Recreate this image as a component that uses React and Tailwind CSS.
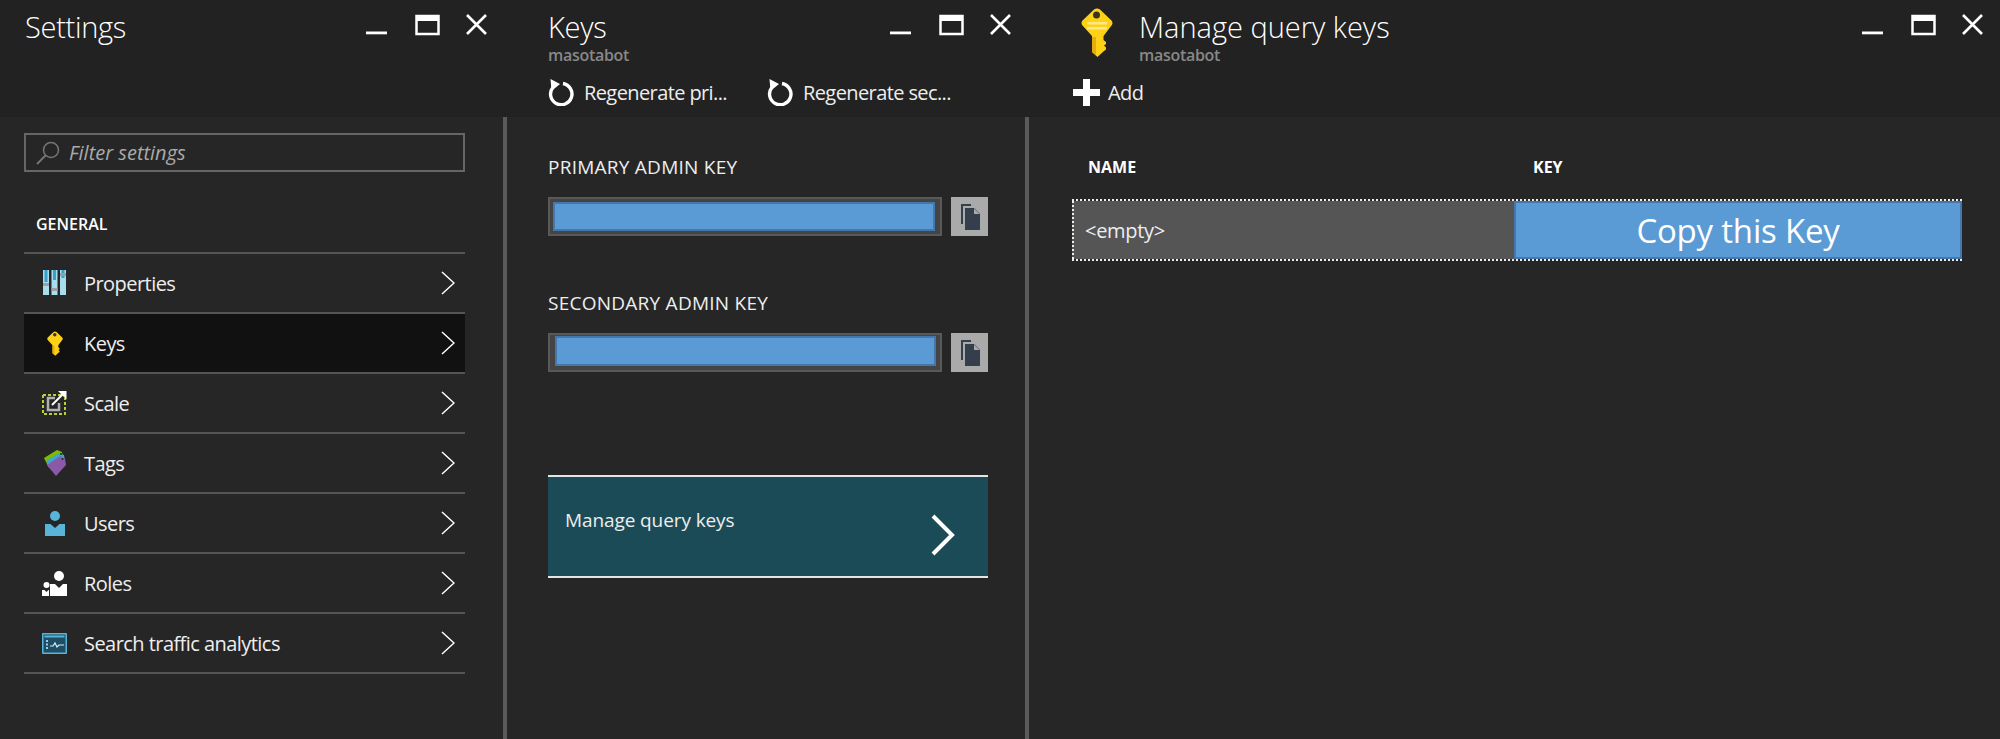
import React from 'react';

const uiFont = "font-['Open_Sans',sans-serif]";

const WindowControls = ({ className = '' }) => (
  <svg width="122" height="22" viewBox="0 0 122 22" className={`shrink-0 ${className}`}>
    <rect x="0" y="17.500" width="21" height="2.800" fill="#fff" />
    <path d="M50.500 2h22v18h-22z" fill="none" stroke="#fff" strokeWidth="2.500" />
    <rect x="50" y="1" width="23" height="6" fill="#fff" />
    <path d="M101 1l19 19M120 1l-19 19" stroke="#fff" strokeWidth="2.600" />
  </svg>
);

const KeyIcon = ({ width, height, stripes }) => (
  <svg width={width} height={height} viewBox="0 0 32 49" className="shrink-0">
    <path
      d="M13 1.500Q16-.5 19 1.500L30.500 12.500Q32.500 15 30.500 17.500L22.500 28V32L25 34V36L23 37.500L25 39.500V41.500L23 43L16.500 49L11 44V28L1.500 17.500Q-.5 15 1.500 12.500Z"
      fill="#fcd116"
    />
    <path d="M11 29H15V47.500L11 44Z" fill="#e8ac10" />
    {stripes && <path d="M6 14H26V16.500H6zM6 19H26V21.500H6z" fill="#ffe88a" />}
    <circle cx="15.500" cy="7" r="3.500" fill="#3a3320" />
  </svg>
);

const PropertiesIcon = () => (
  <svg width="23" height="26" viewBox="0 0 23 26">
    <path d="M0 0h6v25H0zM8.500 0h6v25h-6zM17 0h6v25h-6z" fill="#a9dcec" />
    <path d="M1.500 0h3v12h-3zM10 0h3v10h-3zM18.500 0h3v8h-3z" fill="#35a0cc" />
    <path d="M0 13h6v3H0zM8.500 18h6v3h-6zM17 3h6v3h-6z" fill="#9aa0a4" />
  </svg>
);

const ScaleIcon = () => (
  <svg width="25" height="26" viewBox="0 0 25 26">
    <path d="M1 5h18M1 5v19h22V8" fill="none" stroke="#b5d334" strokeWidth="2" strokeDasharray="3 2" />
    <path d="M13 8H6v12h11v-7" fill="none" stroke="#b0b0b0" strokeWidth="2.500" />
    <path d="M10 15L21 4" stroke="#fff" strokeWidth="2" />
    <path d="M16 1h8.500v8.500z" fill="#fff" />
  </svg>
);

const TagsIcon = () => (
  <svg width="22" height="26" viewBox="0 0 22 26">
    <path d="M0 8L13 0l5 2 1 6L5 18z" fill="#7fba00" />
    <path d="M2 11L15 3l5 2 1 6L7 20z" fill="#3ea6cc" />
    <path d="M3 15L16 6l5 3 1 6-10 11z" fill="#8a5aa8" />
    <circle cx="17" cy="4" r="1" fill="#262626" />
    <circle cx="18.500" cy="9" r="1" fill="#262626" />
  </svg>
);

const UserIcon = () => (
  <svg width="20" height="25" viewBox="0 0 20 25">
    <circle cx="10" cy="5" r="5" fill="#59b4d9" />
    <path d="M0 13h5.500L10 17l4.500-4H20v12H0z" fill="#59b4d9" />
  </svg>
);

const RolesIcon = () => (
  <svg width="25" height="25" viewBox="0 0 25 25">
    <circle cx="17" cy="5" r="5" fill="#fff" />
    <path d="M8 13h5l4 4 4-4h4v12H8z" fill="#fff" />
    <circle cx="4.500" cy="14" r="3" fill="#fff" />
    <path d="M0 19h2.500l2 2 2-2H7v6H0z" fill="#fff" />
  </svg>
);

const AnalyticsIcon = () => (
  <svg width="25" height="21" viewBox="0 0 25 21">
    <rect width="25" height="21" rx="1" fill="#59b4d9" />
    <rect x="1.500" y="1.500" width="22" height="18" fill="#1f4e64" />
    <rect x="2.500" y="2.500" width="20" height="2" fill="#59b4d9" />
    <path d="M4 8h2M4 11.500h2M4 15h2" stroke="#8fd0ea" strokeWidth="2" />
    <path d="M8 13h3l2-3 2 4 2-2h5" fill="none" stroke="#d8f0fa" strokeWidth="1.200" />
  </svg>
);

const Chevron = () => (
  <svg width="14" height="24" viewBox="0 0 14 24" className="shrink-0">
    <path d="M1 1l12 11L1 23" fill="none" stroke="#fff" strokeWidth="1.500" />
  </svg>
);

const RefreshIcon = () => (
  <svg width="26" height="27" viewBox="0 0 26 27" className="shrink-0">
    <path d="M15 4.500A10.700 10.700 0 1 1 4.800 8.500" fill="none" stroke="#fff" strokeWidth="3.400" />
    <path d="M2.500 0L12 5L3.500 12z" fill="#fff" />
  </svg>
);

const CopyIcon = () => (
  <svg width="20" height="27" viewBox="0 0 20 27">
    <path d="M1 1h10v2H3v18H1z" fill="#353e4c" />
    <path d="M5 5h9l6 6v16H5z" fill="#353e4c" />
    <path d="M14 5.500v5.500h5.500z" fill="#aaa" />
  </svg>
);

const MagnifierIcon = () => (
  <svg width="24" height="24" viewBox="0 0 24 24" className="shrink-0">
    <circle cx="15" cy="9" r="7.500" fill="none" stroke="#777" strokeWidth="1.500" />
    <path d="M9.500 14.500L1 23" stroke="#777" strokeWidth="1.800" />
  </svg>
);

const settingsItems = [
  { label: 'Properties', icon: <PropertiesIcon /> },
  { label: 'Keys', icon: <KeyIcon width={16} height={25} />, active: true },
  { label: 'Scale', icon: <ScaleIcon /> },
  { label: 'Tags', icon: <TagsIcon /> },
  { label: 'Users', icon: <UserIcon /> },
  { label: 'Roles', icon: <RolesIcon /> },
  { label: 'Search traffic analytics', icon: <AnalyticsIcon /> },
];

const SettingsRow = ({ label, icon, active }) => (
  <div className="border-t-2 border-[#555]">
    <div className={`flex h-[58px] items-center pr-[10px] ${active ? 'bg-[#111]' : ''}`}>
      <div className="flex w-[60px] shrink-0 justify-center pl-[1px]">{icon}</div>
      <span className="mt-[1px] flex-1 text-[20px] tracking-[-0.55px] text-[#eee]">{label}</span>
      <Chevron />
    </div>
  </div>
);

const PanelHeader = ({ children }) => (
  <div className="relative h-[117px] shrink-0 bg-[#222]">{children}</div>
);

const KeyField = ({ label, top, insetClass }) => (
  <div className={top}>
    <div className="text-[19px] leading-[24px] tracking-[0.25px] text-[#eee]">{label}</div>
    <div className="mt-[18px] flex gap-[9px]">
      <div className={`h-[39px] flex-1 border-2 border-[#595959] bg-[#444] ${insetClass}`}>
        <div className="h-full border-2 border-[#4478ad] bg-[#5b9bd5]" />
      </div>
      <div className="flex h-[39px] w-[37px] items-center justify-center bg-[#aaa]">
        <CopyIcon />
      </div>
    </div>
  </div>
);

export default function App() {
  return (
    <div className={`flex h-[739px] w-[2000px] overflow-hidden bg-[#262626] ${uiFont}`}>
      {/* Settings blade */}
      <section className="flex w-[507px] shrink-0 flex-col">
        <PanelHeader>
          <div className="flex items-start justify-between pt-[14px] pr-[19px]">
            <h1 className="pl-[25px] text-[29px] leading-[26px] font-light tracking-[-0.3px] text-white">Settings</h1>
            <WindowControls />
          </div>
        </PanelHeader>
        <div className="flex-1 border-r-4 border-[#5a5a5a] px-[24px] pt-[16px] pr-[38px]">
          <div className="flex h-[39px] items-center gap-[9px] border-2 border-[#666] pl-[10px]">
            <MagnifierIcon />
            <span className="text-[20px] text-[#aaa] italic">Filter settings</span>
          </div>
          <div className="mt-[41px] mb-[17px] pl-[12px] text-[16px] leading-[22px] font-semibold text-white">
            GENERAL
          </div>
          <div className="border-b-2 border-[#555]">
            {settingsItems.map((item) => (
              <SettingsRow key={item.label} {...item} />
            ))}
          </div>
        </div>
      </section>

      {/* Keys blade */}
      <section className="flex w-[522px] shrink-0 flex-col">
        <PanelHeader>
          <div className="flex items-start justify-between pt-[14px] pr-[17px] pl-[41px]">
            <div>
              <h2 className="text-[29px] leading-[26px] font-light tracking-[-0.3px] text-white">Keys</h2>
              <div className="mt-[5px] text-[16px] leading-[20px] font-semibold tracking-[-0.3px] text-[#888]">masotabot</div>
            </div>
            <WindowControls />
          </div>
          <div className="mt-[14px] flex items-center pl-[41px] text-[20px] leading-[26px] tracking-[-0.6px] text-[#eee]">
            <div className="flex w-[219px] items-center gap-[10px]">
              <RefreshIcon />
              <span>Regenerate pri...</span>
            </div>
            <div className="flex items-center gap-[10px]">
              <RefreshIcon />
              <span>Regenerate sec...</span>
            </div>
          </div>
        </PanelHeader>
        <div className="flex-1 border-r-4 border-[#5a5a5a] pr-[37px] pl-[41px]">
          <KeyField label="PRIMARY ADMIN KEY" top="pt-[38px]" insetClass="py-[3px] pr-[5px] pl-[3px]" />
          <KeyField label="SECONDARY ADMIN KEY" top="pt-[55px]" insetClass="pt-[1px] pr-[4px] pb-[4px] pl-[5px]" />
          <div className="mt-[103px] flex h-[103px] items-center justify-between border-y-2 border-[#e4e4e4] bg-[#1c4b58] pr-[33px] pl-[17px]">
            <span className="mb-[12px] text-[19px] tracking-[-0.1px] text-[#eee]">Manage query keys</span>
            <svg width="24" height="42" viewBox="0 0 24 42" className="mt-[16px]">
              <path d="M2 2l19 19L2 40" fill="none" stroke="#fff" strokeWidth="4" />
            </svg>
          </div>
        </div>
      </section>

      {/* Manage query keys blade */}
      <section className="flex flex-1 flex-col">
        <PanelHeader>
          <div className="flex items-start justify-between pt-[14px] pr-[16px]">
            <div className="flex items-start pl-[52px]">
              <div className="-mt-[6px]">
                <KeyIcon width={32} height={49} stripes />
              </div>
              <div className="pl-[26px]">
                <h2 className="text-[29px] leading-[26px] font-light text-white">Manage query keys</h2>
                <div className="mt-[5px] text-[16px] leading-[20px] font-semibold tracking-[-0.3px] text-[#888]">masotabot</div>
              </div>
            </div>
            <WindowControls />
          </div>
          <div className="mt-[14px] flex items-center gap-[8px] pl-[44px] text-[20px] leading-[26px] tracking-[-0.6px] text-[#eee]">
            <svg width="27" height="27" viewBox="0 0 27 27" className="shrink-0">
              <path d="M10 0h7v10h10v7H17v10h-7V17H0v-7h10z" fill="#fff" />
            </svg>
            <span>Add</span>
          </div>
        </PanelHeader>
        <div className="flex-1 pr-[38px] pl-[43px]">
          <div className="flex pt-[38px] text-[16px] leading-[24px] font-bold text-white">
            <div className="w-[461px] pl-[16px]">NAME</div>
            <div>KEY</div>
          </div>
          <div className="mt-[20px] flex h-[62px] border-y-2 border-dotted border-[#eee]">
            <div className="flex w-[442px] items-center border-l-2 border-dotted border-[#eee] bg-[#555] pt-[2px] pl-[11px] text-[20px] tracking-[-0.3px] text-[#eee]">
              &lt;empty&gt;
            </div>
            <div className="flex flex-1 items-center justify-center border-2 border-[#4478ad] bg-[#5b9bd5] pt-[2px] text-[33px] tracking-[-0.2px] text-white">
              Copy this Key
            </div>
          </div>
        </div>
      </section>
    </div>
  );
}
